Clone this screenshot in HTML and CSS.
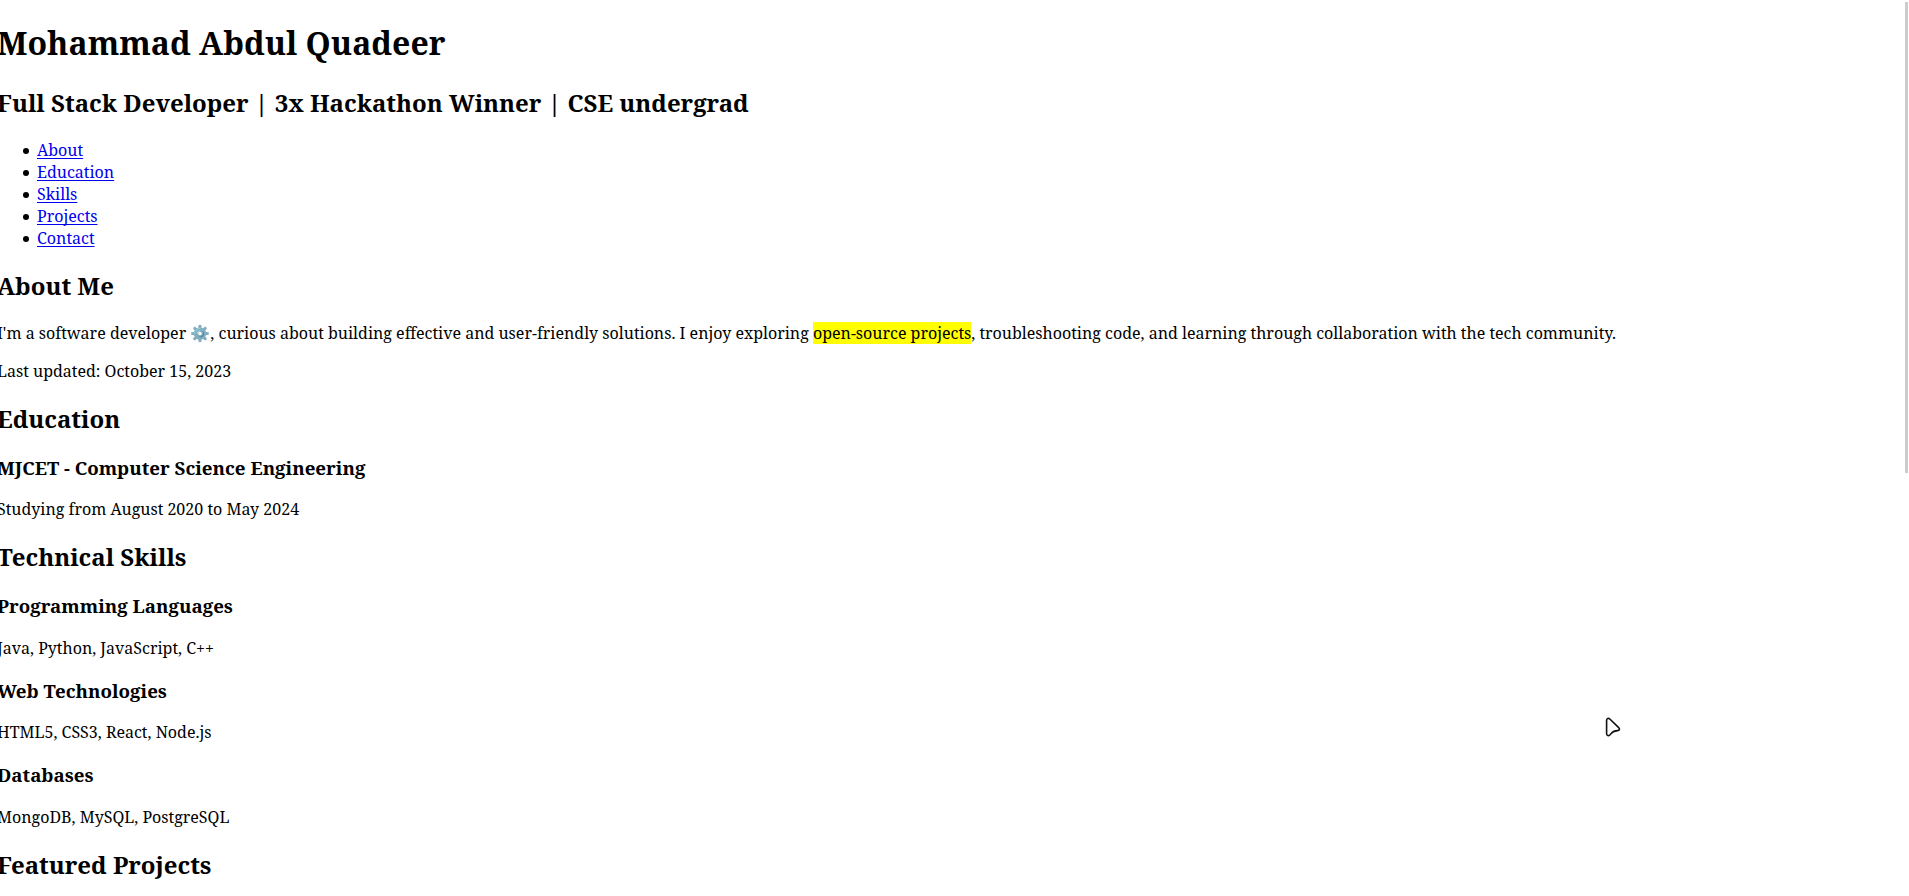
FILE: index.html
```html
<!DOCTYPE html>
<html lang="en">
<head>
<meta charset="utf-8">
<title>Mohammad Abdul Quadeer</title>
<link rel="stylesheet" href="styles.css">
</head>
<body class="page">
<header>
  <h1>Mohammad Abdul Quadeer</h1>
  <h2>Full Stack Developer | 3x Hackathon Winner | CSE undergrad</h2>
  <nav>
    <ul class="menu">
      <li><a href="#about">About</a></li>
      <li><a href="#education">Education</a></li>
      <li><a href="#skills">Skills</a></li>
      <li><a href="#projects">Projects</a></li>
      <li><a href="#contact">Contact</a></li>
    </ul>
  </nav>
</header>
<main>
  <section id="about">
    <h2>About Me</h2>
    <p>I'm a software developer ⚙️, curious about building effective and user-friendly solutions. I enjoy exploring <mark>open-source projects</mark>, troubleshooting code, and learning through collaboration with the tech community.</p>
    <p>Last updated: <time datetime="2023-10-15">October 15, 2023</time></p>
  </section>
  <section id="education">
    <h2>Education</h2>
    <h3>MJCET - Computer Science Engineering</h3>
    <p>Studying from <time datetime="2020-08">August 2020</time> to <time datetime="2024-05">May 2024</time></p>
  </section>
  <section id="skills">
    <h2>Technical Skills</h2>
    <h3>Programming Languages</h3>
    <p>Java, Python, JavaScript, C++</p>
    <h3>Web Technologies</h3>
    <p>HTML5, CSS3, React, Node.js</p>
    <h3>Databases</h3>
    <p>MongoDB, MySQL, PostgreSQL</p>
  </section>
  <section id="projects">
    <h2>Featured Projects</h2>
  </section>
</main>
<div class="scroll-thumb" aria-hidden="true"></div>
<svg class="pointer" viewBox="0 0 16 20" width="16" height="20" aria-hidden="true">
  <path d="M1.6 3.2C1.6 1.3 3.5.8 4.8 2L13.7 10.6C15.1 12 14.4 13.6 12.6 13.6C9.6 13.7 8.2 14 6.4 16.2L4.8 18C3.6 19.2 1.6 18.7 1.6 16.8Z" fill="#fff" stroke="#111" stroke-width="1.6" stroke-linejoin="round"/>
</svg>
</body>
</html>
```

FILE: styles.css
```css
.page {
  margin: 0 8px 0 -3px;
  background: #fff;
  color: #000;
  font-family: "Noto Serif", "DejaVu Serif", serif;
  font-size: 16px;
}

.menu {
  margin: 20px 0;
  padding-left: 26px;
  list-style: none;
}

.menu li {
  display: flex;
  align-items: center;
  gap: 8px;
}

.menu li::before {
  content: "";
  width: 6px;
  height: 6px;
  margin-top: 2px;
  border-radius: 50%;
  background: #000;
}

.menu a {
  color: #00e;
  text-decoration-thickness: 1px;
  text-underline-offset: 2px;
  text-decoration-skip-ink: none;
}

mark {
  background: #ff0;
  color: #000;
}

.scroll-thumb {
  position: fixed;
  top: 2px;
  right: 1px;
  width: 3px;
  height: 471px;
  background: #ccc;
}

.pointer {
  position: fixed;
  left: 1605px;
  top: 717px;
}
```
